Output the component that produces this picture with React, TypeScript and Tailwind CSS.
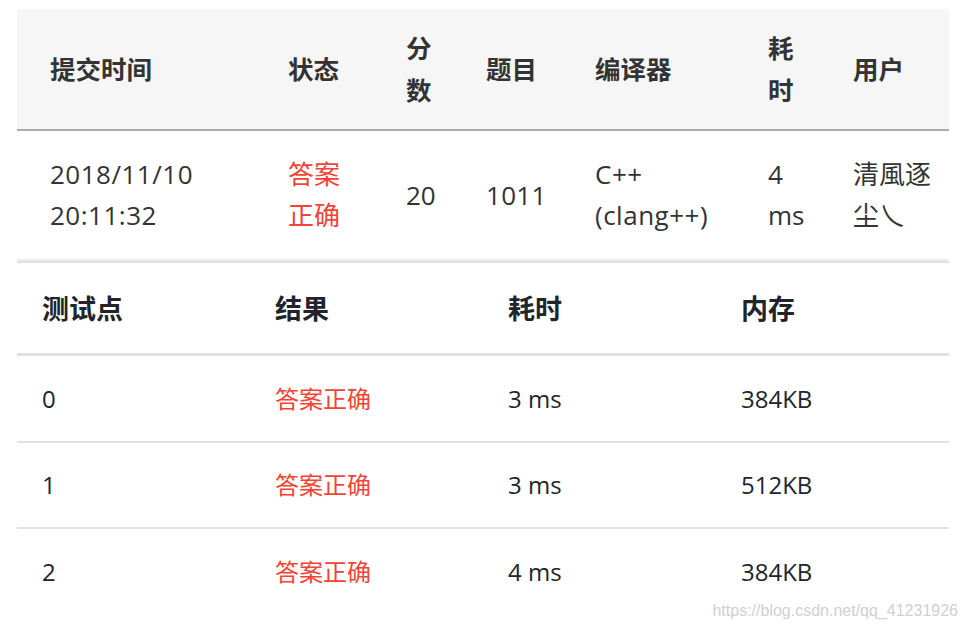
import React from "react";

const font = { fontFamily: '"Open Sans", "Noto Sans CJK SC", sans-serif' };

const topCols = "grid grid-cols-[238px_118px_80px_109px_173px_85px_129px]";

function TopTable() {
  const heads = ["提交时间", "状态", "分数", "题目", "编译器", "耗时", "用户"];
  return (
    <div className="w-[932px]">
      <div className={`${topCols} items-center bg-[#f6f6f6] border-b-2 border-[#aaaaaa] h-[122px] text-[25.5px] leading-[42px] font-bold text-[#333333]`}>
        {heads.map((h) => (
          <div key={h} className="pl-[33px] pr-[14px] break-all">{h}</div>
        ))}
      </div>
      <div className={`${topCols} items-center h-[130px] text-[26px] leading-[41px] text-[#333333] border-b-2 border-[#ececec]`}>
        <div className="pl-[33px] pr-[10px] tracking-[0.5px]">2018/11/10 20:11:32</div>
        <div className="pl-[33px] pr-[14px] text-[#f44336]">答案正确</div>
        <div className="pl-[33px] pr-[14px]">20</div>
        <div className="pl-[33px] pr-[4px] tracking-[0.3px]">1011</div>
        <div className="pl-[33px] pr-[10px] tracking-[0.5px]">C++ (clang++)</div>
        <div className="pl-[33px] pr-[14px]">4 ms</div>
        <div className="pl-[33px] pr-[14px] break-all">清風逐尘乀</div>
      </div>
    </div>
  );
}

function BottomTable() {
  const rows = [
    ["0", "答案正确", "3 ms", "384KB"],
    ["1", "答案正确", "3 ms", "512KB"],
    ["2", "答案正确", "4 ms", "384KB"],
  ];
  const heights = ["h-[87px]", "h-[86px]", "h-[86px]"];
  return (
    <div className="w-[932px] border-t-2 border-[#dee2e6]">
      <div className="grid grid-cols-4 items-center h-[93px] pt-[2px] border-b-[3px] border-[#dee2e6] text-[27px] font-bold text-[#212529]">
        {["测试点", "结果", "耗时", "内存"].map((h) => (
          <div key={h} className="pl-[25px]">{h}</div>
        ))}
      </div>
      {rows.map((r, i) => (
        <div
          key={i}
          className={`grid grid-cols-4 items-center text-[24px] text-[#212529] ${heights[i]} ${i < rows.length - 1 ? "border-b-2 border-[#dee2e6]" : ""}`}
        >
          <div className="pl-[25px]">{r[0]}</div>
          <div className="pl-[25px] text-[#f44336]">{r[1]}</div>
          <div className="pl-[25px]">{r[2]}</div>
          <div className="pl-[25px]">{r[3]}</div>
        </div>
      ))}
    </div>
  );
}

export default function App() {
  return (
    <div className="relative w-[967px] h-[632px] bg-white overflow-hidden" style={font}>
      <div className="pt-[9px] pl-[17px]">
        <TopTable />
        <BottomTable />
      </div>
      <div
        className="absolute right-[9px] bottom-[9px] text-[16px] text-[#d0d0d0]"
        style={{ fontFamily: '"Liberation Sans", Arial, sans-serif' }}
      >
        https://blog.csdn.net/qq_41231926
      </div>
    </div>
  );
}
